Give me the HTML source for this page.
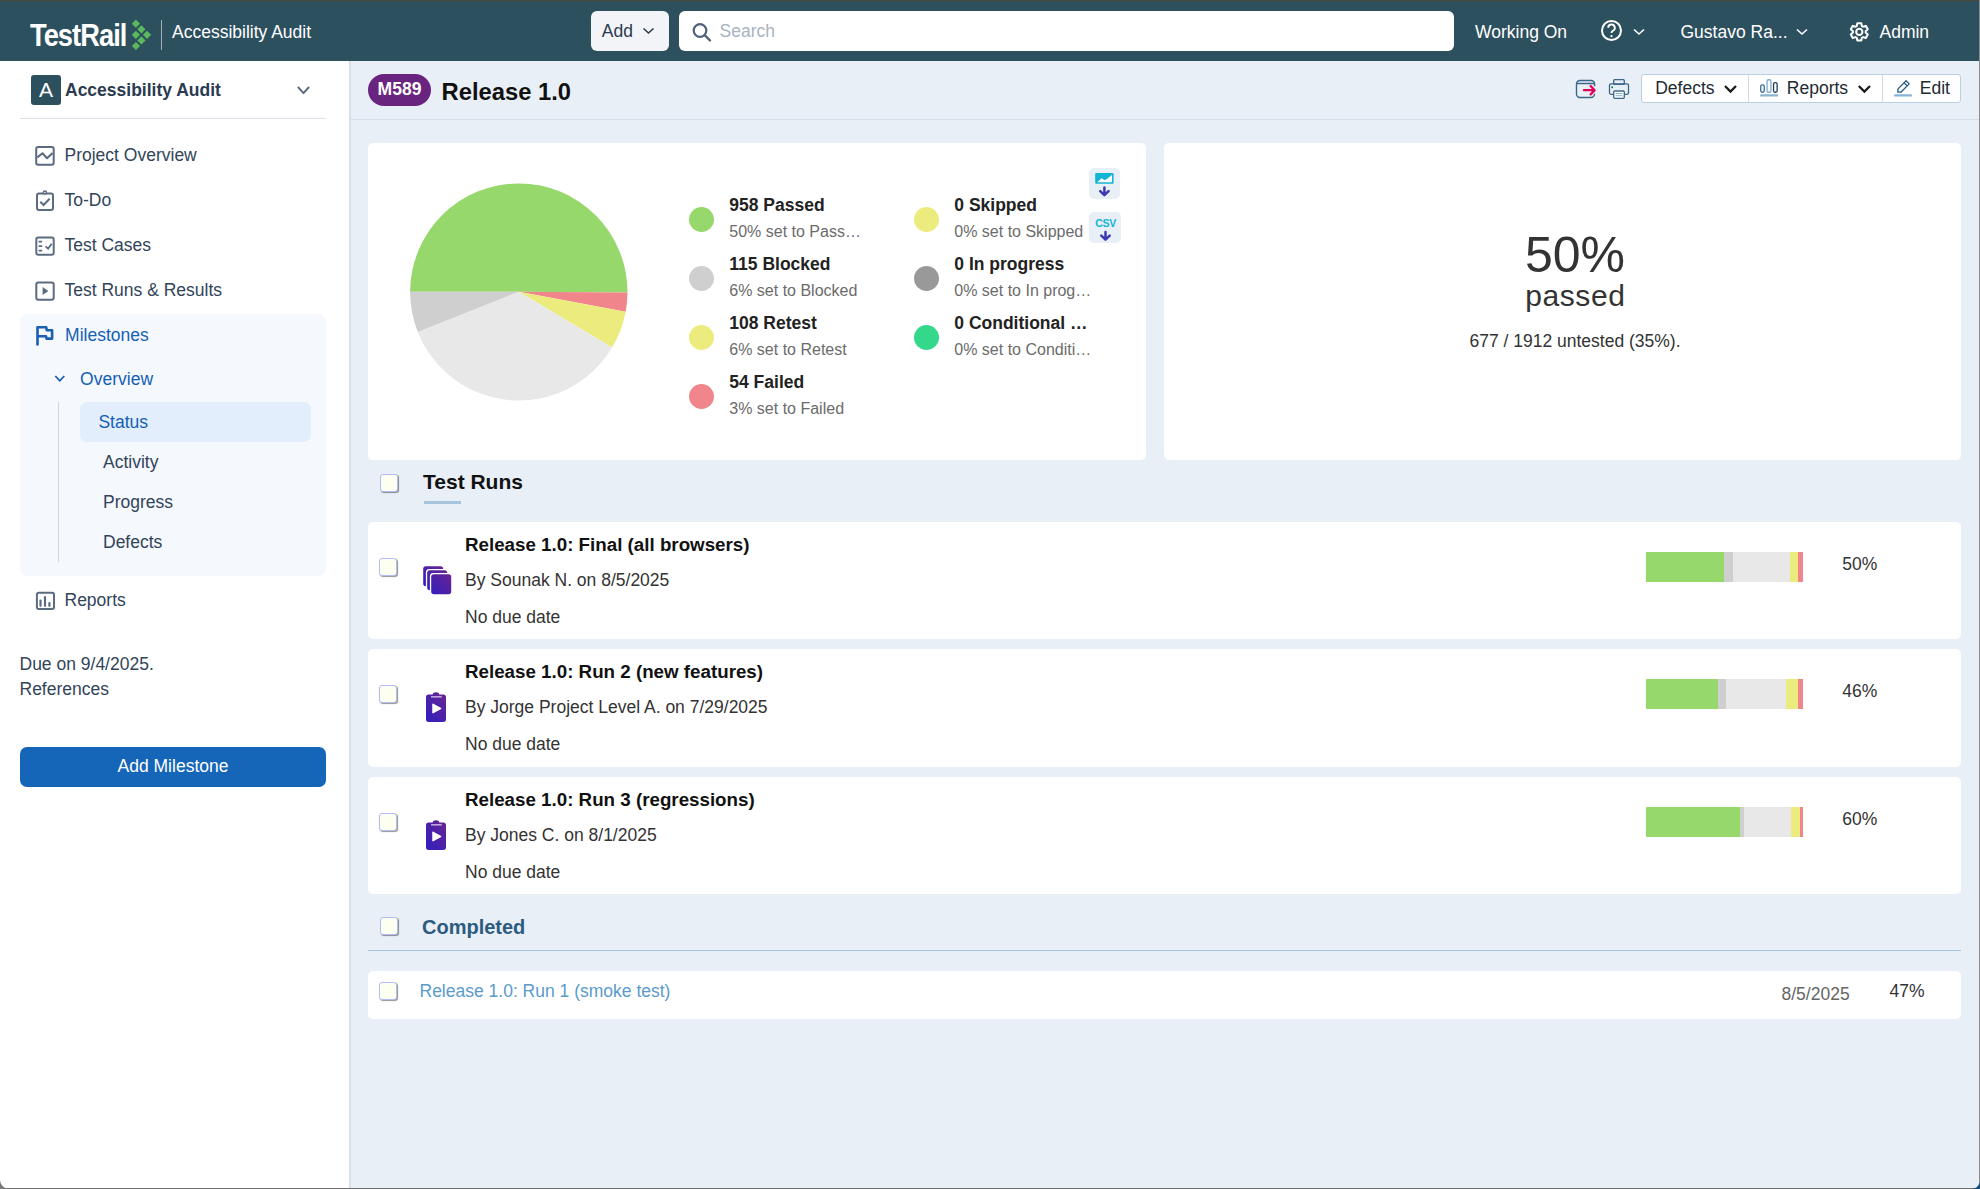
<!DOCTYPE html>
<html><head><meta charset="utf-8">
<style>
*{box-sizing:border-box;margin:0;padding:0}
html,body{width:1980px;height:1189px;overflow:hidden;background:#e9eff7;font-family:"Liberation Sans",sans-serif;position:relative}
.a{position:absolute}
.t{position:absolute;white-space:nowrap;font-size:17.5px;line-height:20px}
.b{font-weight:700}
svg{position:absolute;overflow:visible}
#hdr{left:0;top:0;width:1980px;height:61px;background:#2d505f}
#side{left:0;top:61px;width:351px;height:1128px;background:#fff;border-right:2px solid #d5e0ea}
.nav{color:#32445a}
.ico{stroke:#5b6b80;fill:none;stroke-width:2}
.card{background:#fff;border-radius:5px}
.cb{position:absolute;width:18px;height:18px;border:1px solid #b0bcf2;border-radius:3px;background:#fdfff0;box-shadow:1px 1px 1px rgba(0,0,0,.42)}
</style></head><body>
<!-- HEADER -->
<div id="hdr" class="a"></div>
<div class="a" style="left:0;top:0;width:1980px;height:1px;background:#4a4636"></div>
<div class="t b" id="logo" style="left:30px;top:20px;font-size:31px;line-height:31px;color:#fff;letter-spacing:-1.1px;transform:scaleX(0.88);transform-origin:0 0">TestRail</div>
<svg style="left:0;top:0" width="200" height="60">
<g fill="#5cb85c">
<rect x="133.00" y="20.80" width="5.8" height="5.8" transform="rotate(45 135.9 23.7)"/>
<rect x="138.50" y="26.40" width="5.8" height="5.8" transform="rotate(45 141.4 29.3)"/>
<rect x="133.00" y="31.90" width="5.8" height="5.8" transform="rotate(45 135.9 34.8)"/>
<rect x="144.10" y="31.90" width="5.8" height="5.8" transform="rotate(45 147 34.8)"/>
<rect x="138.50" y="37.50" width="5.8" height="5.8" transform="rotate(45 141.4 40.4)"/>
<rect x="133.00" y="43.10" width="5.8" height="5.8" transform="rotate(45 135.9 46)"/>
</g>
</svg>
<div class="a" style="left:161px;top:20px;width:1px;height:30px;background:#9fb0ba"></div>
<div class="t" style="left:172px;top:22px;color:#fff">Accessibility Audit</div>

<div class="a" style="left:591px;top:11px;width:78px;height:40px;background:#f2f4f7;border-radius:6px"></div>
<div class="t" style="left:601.8px;top:21px;color:#2b3b50">Add</div>
<svg style="left:0;top:0" width="1" height="1"><polyline points="643.5,28.5 648.5,33 653.5,28.5" fill="none" stroke="#2b3b50" stroke-width="1.6"/></svg>

<div class="a" style="left:679px;top:11px;width:775px;height:40px;background:#fff;border-radius:6px"></div>
<svg style="left:0;top:0" width="1" height="1"><circle cx="700" cy="30.5" r="6.3" fill="none" stroke="#50627a" stroke-width="2.2"/><line x1="704.7" y1="35.2" x2="710" y2="40.5" stroke="#50627a" stroke-width="2.4" stroke-linecap="round"/></svg>
<div class="t" style="left:719.5px;top:20.5px;color:#a8b3c1">Search</div>

<div class="t" style="left:1475px;top:22px;color:#fff">Working On</div>
<svg style="left:0;top:0" width="1" height="1"><circle cx="1611.5" cy="30.5" r="9.5" fill="none" stroke="#fff" stroke-width="2"/><path d="M1608.2 27.8 a3.3 3.3 0 1 1 4.6 3 c-1 .5 -1.3 1 -1.3 2.2" fill="none" stroke="#fff" stroke-width="1.9"/><circle cx="1611.5" cy="36.2" r="1.1" fill="#fff"/>
<polyline points="1634,29.5 1639,34 1644,29.5" fill="none" stroke="#fff" stroke-width="1.6"/></svg>
<div class="t" style="left:1680.5px;top:22px;color:#fff">Gustavo Ra...</div>
<svg style="left:0;top:0" width="1" height="1"><polyline points="1797,29.5 1802,34 1807,29.5" fill="none" stroke="#fff" stroke-width="1.6"/></svg>
<svg style="left:0;top:0" width="1" height="1" id="gear"><path d="M1856.70 26.05 L1857.32 23.22 L1861.28 23.22 L1861.90 26.05 L1863.06 26.72 L1865.82 25.84 L1867.81 29.28 L1865.66 31.23 L1865.66 32.57 L1867.81 34.52 L1865.82 37.96 L1863.06 37.08 L1861.90 37.75 L1861.28 40.58 L1857.32 40.58 L1856.70 37.75 L1855.54 37.08 L1852.78 37.96 L1850.79 34.52 L1852.94 32.57 L1852.94 31.23 L1850.79 29.28 L1852.78 25.84 L1855.54 26.72Z" fill="none" stroke="#fff" stroke-width="2" stroke-linejoin="round"/><circle cx="1859.3" cy="31.9" r="3.1" fill="none" stroke="#fff" stroke-width="2.1"/></svg>
<div class="t" style="left:1879.5px;top:22px;color:#fff">Admin</div>

<!-- SIDEBAR -->
<div id="side" class="a"></div>
<div class="a" style="left:31px;top:75px;width:30px;height:30px;background:#2d505f;border-radius:3px"></div>
<div class="t" style="left:31px;width:30px;text-align:center;top:78px;font-size:21px;line-height:23px;color:#fff">A</div>
<div class="t b" style="left:65px;top:79.5px;color:#2b3b50">Accessibility Audit</div>
<svg style="left:0;top:0" width="1" height="1"><polyline points="298.4,87.5 303.5,93.2 308.6,87.5" fill="none" stroke="#5a6a80" stroke-width="1.9" stroke-linecap="round" stroke-linejoin="round"/></svg>
<div class="a" style="left:20px;top:118px;width:305.5px;height:1px;background:#dde2ea"></div>

<svg style="left:0;top:0" width="1" height="1" class="ico">
<rect x="36.2" y="147" width="17.5" height="17.7" rx="2"/>
<polyline points="37.3,157.4 42.5,153.3 47,158.2 52.6,152.9" stroke-linejoin="round"/>
<rect x="37" y="193.6" width="16" height="16.4" rx="2"/>
<circle cx="44.9" cy="192.6" r="1.5" fill="#fff" stroke-width="1.5"/>
<polyline points="40.3,201.7 43.6,205 49.6,198.8"/>
<rect x="36.3" y="237.5" width="17.4" height="17.2" rx="2"/>
<path d="M38.6 241.6 h3.6 M38.6 246.1 h3.6 M38.6 250.6 h3.6" stroke-width="1.8"/>
<polyline points="45.6,246.4 48.1,248.6 51.7,243.8" stroke-width="1.8"/>
<rect x="36.3" y="282.5" width="17.4" height="17.2" rx="2"/>
<path d="M42.6 287 L48.4 291 L42.6 295 Z" fill="#5b6b80" stroke="none"/>
<rect x="36.9" y="592.8" width="17.1" height="16.3" rx="2"/>
<path d="M40.5 600.5 v5.3 M45 597 v8.8 M49.4 603 v2.8" stroke-width="2.2" stroke-linecap="round"/>
</svg>
<div class="t nav" style="left:64.5px;top:145px">Project Overview</div>
<div class="t nav" style="left:64.5px;top:190px">To-Do</div>
<div class="t nav" style="left:64.5px;top:235px">Test Cases</div>
<div class="t nav" style="left:64.5px;top:280px">Test Runs &amp; Results</div>

<div class="a" style="left:20px;top:314px;width:306px;height:262px;background:#f5f8fd;border-radius:8px"></div>
<svg style="left:0;top:0" width="1" height="1"><path d="M37.5 344.5 V327.3 H46.2 L46.8 330.2 H52.1 V338.6 H46.6 L46 336.3 H37.5" fill="none" stroke="#1a5fb4" stroke-width="2.6" stroke-linejoin="round" stroke-linecap="round"/></svg>
<div class="t" style="left:65.1px;top:324.5px;color:#155fb6">Milestones</div>
<svg style="left:0;top:0" width="1" height="1"><polyline points="55.3,376 59.8,380.8 64.3,376" fill="none" stroke="#1a5fb4" stroke-width="1.8"/></svg>
<div class="t" style="left:80.1px;top:369px;color:#155fb6">Overview</div>
<div class="a" style="left:58px;top:402px;width:1px;height:160px;background:#cfd6df"></div>
<div class="a" style="left:80px;top:402px;width:231px;height:40px;background:#e2eefc;border-radius:7px"></div>
<div class="t" style="left:98.4px;top:412px;color:#155fb6">Status</div>
<div class="t nav" style="left:103px;top:451.5px">Activity</div>
<div class="t nav" style="left:103px;top:491.5px">Progress</div>
<div class="t nav" style="left:103px;top:531.5px">Defects</div>

<div class="t nav" style="left:64.5px;top:590px">Reports</div>
<div class="t nav" style="left:19.5px;top:654px">Due on 9/4/2025.</div>
<div class="t nav" style="left:19.5px;top:679px">References</div>
<div class="a" style="left:20px;top:747px;width:306px;height:40px;background:#1565b8;border-radius:7px"></div>
<div class="t" style="left:20px;width:306px;text-align:center;top:756px;color:#fff">Add Milestone</div>

<!-- MAIN TITLE -->
<div class="a" style="left:368px;top:74px;width:63px;height:32px;background:#69247f;border-radius:16px"></div>
<div class="t b" style="left:368px;width:63px;text-align:center;top:79px;color:#fff">M589</div>
<div class="t b" style="left:441.6px;top:77.6px;font-size:23.75px;line-height:27px;color:#111">Release 1.0</div>
<div class="a" style="left:351px;top:119px;width:1629px;height:1px;background:#d3dee8"></div>

<svg style="left:0;top:0" width="1" height="1">
<path d="M1594.6 86.2 V84 a3.5 3.5 0 0 0 -3.5 -3.5 H1580 a3.5 3.5 0 0 0 -3.5 3.5 V94 a3.5 3.5 0 0 0 3.5 3.5 H1591 a3.5 3.5 0 0 0 3.5 -3.5 V93.8 M1576.5 83.5 H1594.6" fill="none" stroke="#3a6688" stroke-width="1.4"/>
<path d="M1584 90.2 H1593.5 M1590.6 86 L1594.6 90.2 L1590.6 94.4" fill="none" stroke="#e0005a" stroke-width="2.3" stroke-linecap="round" stroke-linejoin="round"/>
<rect x="1613.7" y="79.6" width="10.6" height="4.8" rx="1" fill="none" stroke="#3a6688" stroke-width="1.3"/>
<path d="M1613.7 94.3 H1611 a1.5 1.5 0 0 1 -1.5 -1.5 V85.3 a1.5 1.5 0 0 1 1.5 -1.5 H1627 a1.5 1.5 0 0 1 1.5 1.5 V92.8 a1.5 1.5 0 0 1 -1.5 1.5 H1624.3" fill="none" stroke="#3a6688" stroke-width="1.3"/>
<rect x="1613.7" y="91" width="10.6" height="7.3" rx="1" fill="#fff" stroke="#3a6688" stroke-width="1.3"/>
<path d="M1615.6 93.5 H1622.5 M1615.6 95.7 H1622.5" stroke="#7ba6cc" stroke-width="0.9"/>
<circle cx="1612.2" cy="87.2" r="1" fill="#0a8a5a"/>
</svg>

<div class="a" style="left:1641px;top:74px;width:320px;height:29px;background:#fff;border:1px solid #b9cfe2;border-radius:3px"></div>
<div class="a" style="left:1748px;top:75px;width:1px;height:27px;background:#cfdbe6"></div>
<div class="a" style="left:1882px;top:75px;width:1px;height:27px;background:#cfdbe6"></div>
<div class="t" style="left:1655.2px;top:78px;color:#222a33">Defects</div>
<div class="t" style="left:1786.8px;top:78px;color:#222a33">Reports</div>
<div class="t" style="left:1919.8px;top:78px;color:#222a33">Edit</div>
<svg style="left:0;top:0" width="1" height="1">
<polyline points="1725,86 1730.5,91.5 1736,86" fill="none" stroke="#1b1b1b" stroke-width="2.3"/>
<polyline points="1858.8,86 1864.4,91.6 1870,86" fill="none" stroke="#1b1b1b" stroke-width="2.3"/>
<rect x="1760.75" y="84.85" width="3.5" height="7.4" rx="1.5" fill="none" stroke="#3a6a90" stroke-width="1.3"/>
<rect x="1767.05" y="79.75" width="3.9" height="12.5" rx="1.6" fill="none" stroke="#7aaad0" stroke-width="1.3"/>
<rect x="1773.55" y="82.55" width="3.6" height="9.7" rx="1.5" fill="none" stroke="#1e3d58" stroke-width="1.3"/>
<line x1="1761.3" y1="95.4" x2="1776.9" y2="95.4" stroke="#8ab4d4" stroke-width="2.4" stroke-linecap="round"/>
<path d="M1897.8 92.2 L1898 88.9 L1906.1 80.8 L1909.2 83.9 L1901.1 92 Z M1904.1 82.8 L1907.2 85.9" fill="none" stroke="#285a82" stroke-width="1.3" stroke-linejoin="round"/>
<line x1="1895.2" y1="95.4" x2="1910.8" y2="95.4" stroke="#8ab4d4" stroke-width="2.4" stroke-linecap="round"/>
</svg>

<!-- STATS PANELS -->
<div class="a card" style="left:368px;top:143px;width:778px;height:317px"></div>
<div class="a card" style="left:1164px;top:143px;width:797px;height:317px"></div>
<svg style="left:0;top:0" width="1" height="1" id="pie"><path d="M518.8 291.8 L410.10 291.80 A108.7 108.7 0 1 1 627.50 292.51 Z" fill="#96d86c"/><path d="M518.8 291.8 L627.50 292.51 A108.7 108.7 0 0 1 625.66 311.69 Z" fill="#f0868c"/><path d="M518.8 291.8 L625.66 311.69 A108.7 108.7 0 0 1 612.09 347.59 Z" fill="#ecec7e"/><path d="M518.8 291.8 L612.09 347.59 A108.7 108.7 0 0 1 417.77 331.91 Z" fill="#e8e8e8"/><path d="M518.8 291.8 L417.77 331.91 A108.7 108.7 0 0 1 410.10 291.80 Z" fill="#cfcfcf"/></svg>
<div id="legend"><div class="a" style="left:689.0px;top:207.0px;width:25px;height:25px;border-radius:50%;background:#96d86c"></div><div class="t b" style="left:729.3px;top:195px;width:132.5px;overflow:hidden;text-overflow:ellipsis;color:#222">958 Passed</div><div class="t" style="left:729.3px;top:223px;width:132.5px;font-size:16px;line-height:17px;overflow:hidden;text-overflow:ellipsis;color:#6b6b6b">50% set to Passed</div><div class="a" style="left:689.0px;top:266.0px;width:25px;height:25px;border-radius:50%;background:#cfcfcf"></div><div class="t b" style="left:729.3px;top:254px;width:132.5px;overflow:hidden;text-overflow:ellipsis;color:#222">115 Blocked</div><div class="t" style="left:729.3px;top:282px;width:132.5px;font-size:16px;line-height:17px;overflow:hidden;text-overflow:ellipsis;color:#6b6b6b">6% set to Blocked</div><div class="a" style="left:689.0px;top:325.0px;width:25px;height:25px;border-radius:50%;background:#ecec7e"></div><div class="t b" style="left:729.3px;top:313px;width:132.5px;overflow:hidden;text-overflow:ellipsis;color:#222">108 Retest</div><div class="t" style="left:729.3px;top:341px;width:132.5px;font-size:16px;line-height:17px;overflow:hidden;text-overflow:ellipsis;color:#6b6b6b">6% set to Retest</div><div class="a" style="left:689.0px;top:384.0px;width:25px;height:25px;border-radius:50%;background:#f0868c"></div><div class="t b" style="left:729.3px;top:372px;width:132.5px;overflow:hidden;text-overflow:ellipsis;color:#222">54 Failed</div><div class="t" style="left:729.3px;top:400px;width:132.5px;font-size:16px;line-height:17px;overflow:hidden;text-overflow:ellipsis;color:#6b6b6b">3% set to Failed</div><div class="a" style="left:913.9px;top:207.0px;width:25px;height:25px;border-radius:50%;background:#ecec7e"></div><div class="t b" style="left:954.3px;top:195px;width:138px;overflow:hidden;text-overflow:ellipsis;color:#222">0 Skipped</div><div class="t" style="left:954.3px;top:223px;width:138px;font-size:16px;line-height:17px;overflow:hidden;text-overflow:ellipsis;color:#6b6b6b">0% set to Skipped</div><div class="a" style="left:913.9px;top:266.0px;width:25px;height:25px;border-radius:50%;background:#999"></div><div class="t b" style="left:954.3px;top:254px;width:138px;overflow:hidden;text-overflow:ellipsis;color:#222">0 In progress</div><div class="t" style="left:954.3px;top:282px;width:138px;font-size:16px;line-height:17px;overflow:hidden;text-overflow:ellipsis;color:#6b6b6b">0% set to In progress</div><div class="a" style="left:913.9px;top:325.0px;width:25px;height:25px;border-radius:50%;background:#33d88a"></div><div class="t b" style="left:954.3px;top:313px;width:138px;overflow:hidden;text-overflow:ellipsis;color:#222">0 Conditional Pass</div><div class="t" style="left:954.3px;top:341px;width:138px;font-size:16px;line-height:17px;overflow:hidden;text-overflow:ellipsis;color:#6b6b6b">0% set to Conditional Pass</div></div>
<div class="a" style="left:1089px;top:168px;width:31px;height:31px;background:#e9eff7;border-radius:5px"></div>
<div class="a" style="left:1089px;top:212px;width:32px;height:31px;background:#e9eff7;border-radius:5px"></div>
<svg style="left:0;top:0" width="1" height="1">
<rect x="1095.2" y="173" width="18.4" height="10.8" rx="1" fill="#12b5d6"/>
<path d="M1097.2 182.3 L1101.5 178.2 L1105 180.3 L1112 175 V182.3 Z" fill="#fff"/>
<path d="M1104.4 187.5 V194.8 M1100.2 191.2 L1104.4 195.2 L1108.6 191.2" fill="none" stroke="#3b3ab4" stroke-width="2.5" stroke-linecap="round" stroke-linejoin="round"/>
<path d="M1105.5 232 V239.3 M1101.3 235.7 L1105.5 239.7 L1109.7 235.7" fill="none" stroke="#3b3ab4" stroke-width="2.5" stroke-linecap="round" stroke-linejoin="round"/>
</svg>
<div class="t b" style="left:1095.3px;top:216.8px;font-size:10.5px;line-height:12px;color:#12b5d6;letter-spacing:-0.3px">CSV</div>

<div class="t" style="left:1375px;width:400px;text-align:center;top:226.5px;font-size:50px;line-height:56px;color:#333">50%</div>
<div class="t" style="left:1375px;width:400px;text-align:center;top:278.6px;font-size:30px;line-height:33px;letter-spacing:0.6px;text-indent:0.6px;color:#333">passed</div>
<div class="t" style="left:1375px;width:400px;text-align:center;top:330.7px;color:#333">677 / 1912 untested (35%).</div>

<!-- TEST RUNS -->
<div class="cb" style="left:380px;top:474px"></div>
<div class="t b" style="left:423px;top:470.2px;font-size:21px;line-height:23px;color:#111">Test Runs</div>
<div class="a" style="left:424px;top:501px;width:37px;height:3px;background:#a8c4dc"></div>
<div id="runs"><div class="a card" style="left:368px;top:522px;width:1593px;height:117px"></div><div class="cb" style="left:379px;top:558px"></div><div class="t b" style="left:465px;top:534.2px;font-size:18.75px;line-height:21px;color:#111">Release 1.0: Final (all browsers)</div><div class="t" style="left:465px;top:570px;color:#333">By Sounak N. on 8/5/2025</div><div class="t" style="left:465px;top:607px;color:#333">No due date</div><div class="a" style="left:1646px;top:552px;width:77.80px;height:30px;background:#96d86c"></div><div class="a" style="left:1723.8px;top:552px;width:9.10px;height:30px;background:#cfcfcf"></div><div class="a" style="left:1732.9px;top:552px;width:57.10px;height:30px;background:#e8e8e8"></div><div class="a" style="left:1790px;top:552px;width:7.80px;height:30px;background:#ecec7e"></div><div class="a" style="left:1797.8px;top:552px;width:5.20px;height:30px;background:#f0868c"></div><div class="t" style="left:1842.3px;top:553.6px;color:#333">50%</div><svg style="left:0;top:0" width="1" height="1"><defs><linearGradient id="g0" gradientUnits="userSpaceOnUse" x1="423.2" y1="594.2" x2="451.2" y2="566.2"><stop offset="0" stop-color="#2a1cc4"/><stop offset="1" stop-color="#72268a"/></linearGradient></defs><rect x="423.20" y="566.20" width="20" height="20" rx="2.6" fill="url(#g0)"/><rect x="425.90" y="568.90" width="22.6" height="22.6" rx="3.4" fill="#fff"/><rect x="427.20" y="570.20" width="20" height="20" rx="2.6" fill="url(#g0)"/><rect x="429.90" y="572.90" width="22.6" height="22.6" rx="3.4" fill="#fff"/><rect x="431.20" y="574.20" width="20" height="20" rx="2.6" fill="url(#g0)"/></svg><div class="a card" style="left:368px;top:649px;width:1593px;height:118px"></div><div class="cb" style="left:379px;top:685px"></div><div class="t b" style="left:465px;top:661.2px;font-size:18.75px;line-height:21px;color:#111">Release 1.0: Run 2 (new features)</div><div class="t" style="left:465px;top:697px;color:#333">By Jorge Project Level A. on 7/29/2025</div><div class="t" style="left:465px;top:734px;color:#333">No due date</div><div class="a" style="left:1646px;top:679px;width:71.80px;height:30px;background:#96d86c"></div><div class="a" style="left:1717.8px;top:679px;width:8.10px;height:30px;background:#cfcfcf"></div><div class="a" style="left:1725.9px;top:679px;width:60.20px;height:30px;background:#e8e8e8"></div><div class="a" style="left:1786.1px;top:679px;width:11.80px;height:30px;background:#ecec7e"></div><div class="a" style="left:1797.9px;top:679px;width:5.10px;height:30px;background:#f0868c"></div><div class="t" style="left:1842.3px;top:680.6px;color:#333">46%</div><svg style="left:0;top:0" width="1" height="1"><defs><linearGradient id="g1" x1="0" y1="1" x2="1" y2="0"><stop offset="0" stop-color="#2e1ec0"/><stop offset="1" stop-color="#6a2590"/></linearGradient></defs>
<path d="M428.6 694.5 H432.8 a3.2 2.3 0 0 1 6.4 0 H443.4 a2.6 2.6 0 0 1 2.6 2.6 V719.3 a2.6 2.6 0 0 1 -2.6 2.6 H428.6 a2.6 2.6 0 0 1 -2.6 -2.6 V697.0999999999999 a2.6 2.6 0 0 1 2.6 -2.6Z" fill="url(#g1)"/>
<rect x="431" y="696.4" width="10.8" height="0.95" fill="#fff"/>
<path d="M432.8 703.9 L441.2 708.5 L432.8 713.0999999999999Z" fill="#fff" stroke="#fff" stroke-width="1" stroke-linejoin="round"/></svg><div class="a card" style="left:368px;top:777px;width:1593px;height:117px"></div><div class="cb" style="left:379px;top:813px"></div><div class="t b" style="left:465px;top:789.2px;font-size:18.75px;line-height:21px;color:#111">Release 1.0: Run 3 (regressions)</div><div class="t" style="left:465px;top:825px;color:#333">By Jones C. on 8/1/2025</div><div class="t" style="left:465px;top:862px;color:#333">No due date</div><div class="a" style="left:1646px;top:807px;width:94.20px;height:30px;background:#96d86c"></div><div class="a" style="left:1740.2px;top:807px;width:3.70px;height:30px;background:#cfcfcf"></div><div class="a" style="left:1743.9px;top:807px;width:47.10px;height:30px;background:#e8e8e8"></div><div class="a" style="left:1791px;top:807px;width:8.90px;height:30px;background:#ecec7e"></div><div class="a" style="left:1799.9px;top:807px;width:3.10px;height:30px;background:#f0868c"></div><div class="t" style="left:1842.3px;top:808.6px;color:#333">60%</div><svg style="left:0;top:0" width="1" height="1"><defs><linearGradient id="g2" x1="0" y1="1" x2="1" y2="0"><stop offset="0" stop-color="#2e1ec0"/><stop offset="1" stop-color="#6a2590"/></linearGradient></defs>
<path d="M428.6 822.5 H432.8 a3.2 2.3 0 0 1 6.4 0 H443.4 a2.6 2.6 0 0 1 2.6 2.6 V847.3 a2.6 2.6 0 0 1 -2.6 2.6 H428.6 a2.6 2.6 0 0 1 -2.6 -2.6 V825.0999999999999 a2.6 2.6 0 0 1 2.6 -2.6Z" fill="url(#g2)"/>
<rect x="431" y="824.4" width="10.8" height="0.95" fill="#fff"/>
<path d="M432.8 831.9 L441.2 836.5 L432.8 841.0999999999999Z" fill="#fff" stroke="#fff" stroke-width="1" stroke-linejoin="round"/></svg></div>

<!-- COMPLETED -->
<div class="cb" style="left:380px;top:917px"></div>
<div class="t b" style="left:422px;top:916px;font-size:20px;line-height:22px;color:#2d5b80">Completed</div>
<div class="a" style="left:368px;top:950px;width:1593px;height:1px;background:#a8c4dc"></div>
<div class="a card" style="left:368px;top:971px;width:1593px;height:48px"></div>
<div class="cb" style="left:379px;top:982px"></div>
<div class="t" style="left:419.5px;top:981px;color:#5b9bcb">Release 1.0: Run 1 (smoke test)</div>
<div class="t" style="left:1781.5px;top:984px;color:#666">8/5/2025</div>
<div class="t" style="left:1889.5px;top:981px;color:#333">47%</div>
<div class="a" style="left:0px;top:1188px;width:1980px;height:1px;background:#6f6f6f"></div>
<div class="a" style="left:1979px;top:0;width:1px;height:1189px;background:#8c8c8c"></div>
<svg style="left:0;top:0" width="1" height="1"><path d="M0 1180 V1189 H9 A9 9 0 0 1 0 1180Z" fill="#7a7a7a"/><path d="M1980 1179 V1189 H1970 A9 9 0 0 0 1980 1179Z" fill="#1a4a78"/></svg>

</body></html>
